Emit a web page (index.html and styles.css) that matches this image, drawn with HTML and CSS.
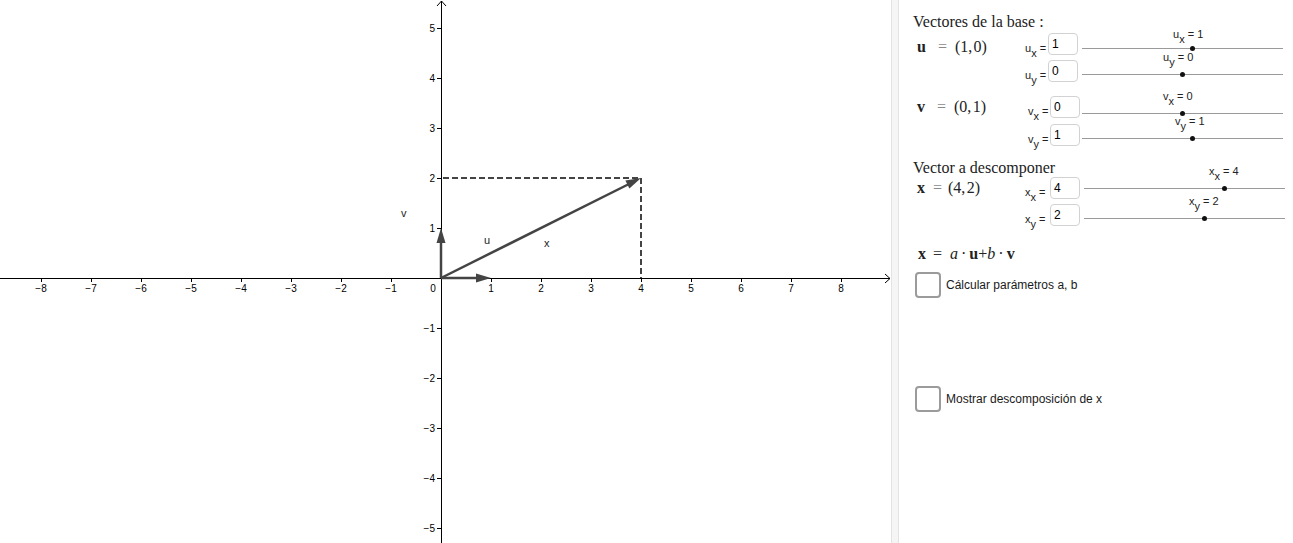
FILE: index.html
```html
<!DOCTYPE html>
<html lang="es">
<head>
<meta charset="utf-8">
<title>Descomposición de un vector</title>
<link rel="stylesheet" href="styles.css">
</head>
<body>
<div class="app">
  <svg class="graph" width="891" height="543" viewBox="0 0 891 543" xmlns="http://www.w3.org/2000/svg">
    <g class="axes" stroke="#000" stroke-width="1" fill="none">
      <line x1="0" y1="278.5" x2="890" y2="278.5"/>
      <polyline points="885,274 890,278.5 885,283"/>
      <line x1="441.5" y1="1" x2="441.5" y2="543"/>
      <polyline points="437,6 441.5,1 446,6"/>
      <path d="M41.5 278v4M91.5 278v4M141.5 278v4M191.5 278v4M241.5 278v4M291.5 278v4M341.5 278v4M391.5 278v4M491.5 278v4M541.5 278v4M591.5 278v4M641.5 278v4M691.5 278v4M741.5 278v4M791.5 278v4M841.5 278v4"/>
      <path d="M437 28.5h4M437 78.5h4M437 128.5h4M437 178.5h4M437 228.5h4M437 328.5h4M437 378.5h4M437 428.5h4M437 478.5h4M437 528.5h4"/>
    </g>
    <g class="ticklabels" text-anchor="middle">
      <text x="41" y="292">−8</text>
      <text x="91" y="292">−7</text>
      <text x="141" y="292">−6</text>
      <text x="191" y="292">−5</text>
      <text x="241" y="292">−4</text>
      <text x="291" y="292">−3</text>
      <text x="341" y="292">−2</text>
      <text x="391" y="292">−1</text>
      <text x="433" y="292">0</text>
      <text x="491" y="292">1</text>
      <text x="541" y="292">2</text>
      <text x="591" y="292">3</text>
      <text x="641" y="292">4</text>
      <text x="691" y="292">5</text>
      <text x="741" y="292">6</text>
      <text x="791" y="292">7</text>
      <text x="841" y="292">8</text>
    </g>
    <g class="ticklabels" text-anchor="end">
      <text x="435" y="32">5</text>
      <text x="435" y="82">4</text>
      <text x="435" y="132">3</text>
      <text x="435" y="182">2</text>
      <text x="435" y="232">1</text>
      <text x="435" y="332">−1</text>
      <text x="435" y="382">−2</text>
      <text x="435" y="432">−3</text>
      <text x="435" y="482">−4</text>
      <text x="435" y="532">−5</text>
    </g>
    <g class="dashes" stroke="#444" stroke-width="2" stroke-dasharray="6 3" fill="none">
      <line x1="443" y1="178" x2="641" y2="178"/>
      <line x1="641" y1="178" x2="641" y2="278"/>
    </g>
    <g class="vectors" stroke="#444" stroke-width="2.5" fill="#444">
      <line x1="441" y1="278" x2="478" y2="278"/>
      <polygon points="491,278 476,273.5 476,282.5" stroke="none"/>
      <line x1="441" y1="278" x2="441" y2="241"/>
      <polygon points="441,228 436.5,243 445.5,243" stroke="none"/>
      <line x1="441" y1="278" x2="629" y2="184"/>
      <polygon points="641,178 629.4,188.6 625.4,180.6" stroke="none"/>
    </g>
    <g class="vlabels">
      <text x="401" y="217">v</text>
      <text x="484" y="244">u</text>
      <text x="544" y="247">x</text>
    </g>
  </svg>
  <div class="divider"></div>
  <div class="panel">
    <div class="title t1">Vectores de la base :</div>

    <div class="group g-u">
      <div class="prow">
        <div class="fcell fcell-u fcell-low"><span class="formula"><b>u</b><span class="eq eq-u">=</span><span>(1,&#8202;0)</span></span></div>
        <div class="plabel plabel-u">u<span class="sub">x</span> =</div>
        <div class="pinput">1</div>
        <div class="slider slider-u track-15">
          <div class="track"><span class="slabel near" style="left:91px">u<span class="sub">x</span> = 1</span><span class="dot" style="left:55%"></span></div>
        </div>
      </div>
      <div class="prow">
        <div class="fcell fcell-u"></div>
        <div class="plabel plabel-u">u<span class="sub">y</span> =</div>
        <div class="pinput">0</div>
        <div class="slider slider-u">
          <div class="track"><span class="slabel" style="left:81px">u<span class="sub">y</span> = 0</span><span class="dot" style="left:50%"></span></div>
        </div>
      </div>
    </div>

    <div class="group g-v">
      <div class="prow">
        <div class="fcell fcell-v"><span class="formula"><b>v</b><span class="eq eq-u">=</span><span>(0,&#8202;1)</span></span></div>
        <div class="plabel plabel-v">v<span class="sub">x</span> =</div>
        <div class="pinput">0</div>
        <div class="slider slider-v track-17">
          <div class="track"><span class="slabel" style="left:81px">v<span class="sub">x</span> = 0</span><span class="dot" style="left:50%"></span></div>
        </div>
      </div>
      <div class="prow">
        <div class="fcell fcell-v"></div>
        <div class="plabel plabel-v">v<span class="sub">y</span> =</div>
        <div class="pinput">1</div>
        <div class="slider slider-v">
          <div class="track"><span class="slabel" style="left:93px">v<span class="sub">y</span> = 1</span><span class="dot" style="left:55%"></span></div>
        </div>
      </div>
    </div>

    <div class="title t2">Vector a descomponer</div>

    <div class="group g-x">
      <div class="prow">
        <div class="fcell fcell-x"><span class="formula"><b>x</b><span class="eq eq-x">=</span><span>(4,&#8202;2)</span></span></div>
        <div class="plabel plabel-x">x<span class="sub">x</span> =</div>
        <div class="pinput">4</div>
        <div class="slider slider-x track-11">
          <div class="track"><span class="slabel" style="left:125px">x<span class="sub">x</span> = 4</span><span class="dot" style="left:70%"></span></div>
        </div>
      </div>
      <div class="prow">
        <div class="fcell fcell-x"></div>
        <div class="plabel plabel-x">x<span class="sub">y</span> =</div>
        <div class="pinput">2</div>
        <div class="slider slider-x">
          <div class="track"><span class="slabel" style="left:105px">x<span class="sub">y</span> = 2</span><span class="dot" style="left:60%"></span></div>
        </div>
      </div>
    </div>

    <div class="decomp"><b>x</b><span class="eq eq-d">=</span><i>a</i><span class="mdot">·</span><b>u</b>+<i>b</i><span class="mdot">·</span><b>v</b></div>

    <div class="check check-1"><span class="box"></span><span class="ctext">Cálcular parámetros a, b</span></div>
    <div class="check check-2"><span class="box"></span><span class="ctext">Mostrar descomposición de x</span></div>
  </div>
</div>
</body>
</html>
```

FILE: styles.css
```css
html, body {
  margin: 0;
  padding: 0;
  background: #fff;
}

body {
  font-family: "Liberation Sans", Arial, sans-serif;
  color: #000;
}

.app {
  display: flex;
  width: 1293px;
  height: 543px;
  overflow: hidden;
}

.graph {
  display: block;
  flex: none;
}

.ticklabels text {
  font-family: "Liberation Sans", Arial, sans-serif;
  font-size: 10px;
  fill: #000;
}

.vlabels text {
  font-family: "Liberation Sans", Arial, sans-serif;
  font-size: 11px;
  fill: #222;
}

.divider {
  flex: none;
  width: 8px;
  height: 543px;
  box-sizing: border-box;
  background: #f5f5f5;
  border-left: 1px solid #e3e3e3;
  border-right: 1px solid #e3e3e3;
}

.panel {
  flex: none;
  width: 394px;
  box-sizing: border-box;
  padding-left: 14px;
  display: flex;
  flex-direction: column;
}

.title {
  font-family: "Liberation Serif", "Times New Roman", serif;
  font-size: 16px;
  line-height: 18px;
  color: #222;
  white-space: nowrap;
}

.t1 { margin-top: 13px; }
.t2 { margin-top: 13px; }

.group {
  display: flex;
  flex-direction: column;
  gap: 5px;
}

.g-u { margin-top: 2px; }
.g-v { margin-top: 14px; gap: 6px; }
.g-x { margin-top: 0; }

.prow {
  display: flex;
  height: 22px;
  align-items: flex-start;
}

.fcell {
  flex: none;
  height: 22px;
  box-sizing: border-box;
  padding-left: 4px;
  font-family: "Liberation Serif", "Times New Roman", serif;
  font-size: 16px;
  line-height: 22px;
  color: #222;
  white-space: nowrap;
}

.fcell-low { padding-top: 3px; }

.fcell-u { width: 112px; }
.fcell-v { width: 115px; }
.fcell-x { width: 112px; }

.formula b { font-weight: bold; }

.eq { color: #8a8a8a; }
.eq-u { margin: 0 8px 0 12px; }
.eq-x { margin: 0 6px 0 8px; }

.plabel {
  flex: none;
  height: 22px;
  box-sizing: border-box;
  padding-top: 9px;
  font-size: 11px;
  line-height: 12px;
  color: #222;
  white-space: nowrap;
}

.plabel-u { width: 23px; }
.plabel-v { width: 22px; }
.plabel-x { width: 25px; }

.sub {
  vertical-align: -5px;
}

.pinput {
  flex: none;
  width: 30px;
  height: 22px;
  box-sizing: border-box;
  border: 1px solid #d2d2d2;
  border-radius: 4px;
  padding-left: 3px;
  font-size: 12px;
  line-height: 20px;
  color: #000;
  background: #fff;
}

.slider {
  flex: none;
  width: 201px;
  height: 22px;
  box-sizing: border-box;
  padding-top: 14px;
}

.slider-u { margin-left: 4px; }
.slider-v { margin-left: 2px; }
.slider-x { margin-left: 4px; }

.track-15 { padding-top: 15px; }
.track-17 { padding-top: 17px; }
.track-11 { padding-top: 11px; }

.track {
  position: relative;
  height: 1px;
  background: #9a9a9a;
}

.slabel {
  position: absolute;
  bottom: 7px;
  font-size: 11px;
  line-height: 12px;
  color: #222;
  white-space: nowrap;
}

.slabel.near { bottom: 4px; }

.dot {
  position: absolute;
  top: -2px;
  width: 5px;
  height: 5px;
  margin-left: -2.5px;
  border-radius: 50%;
  background: #111;
}

.decomp {
  margin-top: 19px;
  padding-left: 5px;
  font-family: "Liberation Serif", "Times New Roman", serif;
  font-size: 16px;
  line-height: 18px;
  color: #222;
  white-space: nowrap;
}

.eq-d { color: #333; margin: 0 8px 0 7px; }

.mdot { margin: 0 3px; }

.check {
  display: flex;
  align-items: center;
  gap: 5px;
  padding-left: 2px;
}

.check-1 { margin-top: 9px; }
.check-2 { margin-top: 88px; }

.box {
  flex: none;
  width: 26px;
  height: 26px;
  box-sizing: border-box;
  border: 2px solid #9b9b9b;
  border-radius: 4px;
  background: #fff;
}

.ctext {
  font-size: 12px;
  line-height: 14px;
  color: #1a1a1a;
  white-space: nowrap;
}
```
